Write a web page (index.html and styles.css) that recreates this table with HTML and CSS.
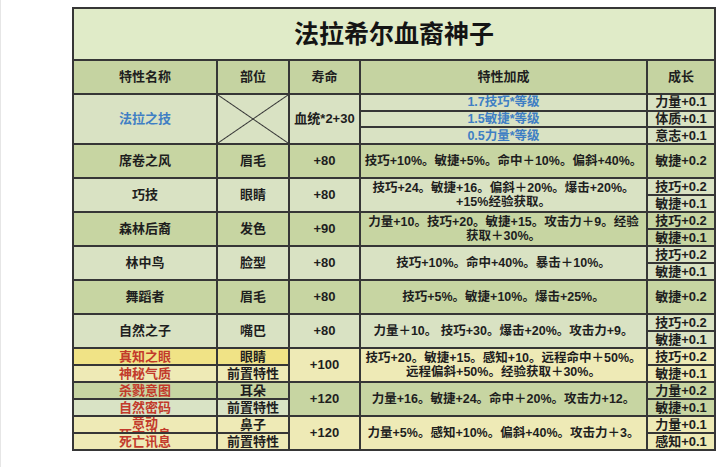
FILE: index.html
```html
<!DOCTYPE html>
<html lang="zh">
<head>
<meta charset="utf-8">
<title>法拉希尔血裔神子</title>
<link rel="stylesheet" href="styles.css">
</head>
<body>
<div class="page">
<table class="sheet">
  <colgroup>
    <col class="c1"><col class="c2"><col class="c3"><col class="c4"><col class="c5">
  </colgroup>
  <tr class="title-row"><td colspan="5" class="title">法拉希尔血裔神子</td></tr>
  <tr class="head"><th>特性名称</th><th>部位</th><th>寿命</th><th>特性加成</th><th>成长</th></tr>

  <tr class="t light"><td rowspan="3" class="blue">法拉之技</td><td rowspan="3" class="cross"></td><td rowspan="3">血统*2+30</td><td class="blue fx">1.7技巧*等级</td><td>力量+0.1</td></tr>
  <tr class="t light"><td class="blue fx">1.5敏捷*等级</td><td>体质+0.1</td></tr>
  <tr class="t light"><td class="blue fx">0.5力量*等级</td><td>意志+0.1</td></tr>

  <tr class="s dark"><td rowspan="2">席卷之风</td><td rowspan="2">眉毛</td><td rowspan="2">+80</td><td rowspan="2" class="fx">技巧+10%。敏捷+5%。命中＋10%。偏斜+40%。</td><td rowspan="2">敏捷+0.2</td></tr>
  <tr class="s dark"></tr>

  <tr class="s light"><td rowspan="2">巧技</td><td rowspan="2">眼睛</td><td rowspan="2">+80</td><td rowspan="2" class="fx">技巧+24。敏捷+16。偏斜＋20%。爆击+20%。<br>+15%经验获取。</td><td>技巧+0.2</td></tr>
  <tr class="s light"><td>敏捷+0.1</td></tr>

  <tr class="s dark"><td rowspan="2">森林后裔</td><td rowspan="2">发色</td><td rowspan="2">+90</td><td rowspan="2" class="fx">力量+10。技巧+20。敏捷+15。攻击力＋9。经验<br>获取＋30%。</td><td>技巧+0.2</td></tr>
  <tr class="s dark"><td>敏捷+0.1</td></tr>

  <tr class="s light"><td rowspan="2">林中鸟</td><td rowspan="2">脸型</td><td rowspan="2">+80</td><td rowspan="2" class="fx">技巧+10%。命中+40%。暴击＋10%。</td><td>技巧+0.2</td></tr>
  <tr class="s light"><td>敏捷+0.1</td></tr>

  <tr class="s dark"><td rowspan="2">舞蹈者</td><td rowspan="2">眉毛</td><td rowspan="2">+80</td><td rowspan="2" class="fx">技巧+5%。敏捷+10%。爆击+25%。</td><td rowspan="2">敏捷+0.2</td></tr>
  <tr class="s dark"></tr>

  <tr class="s light"><td rowspan="2">自然之子</td><td rowspan="2">嘴巴</td><td rowspan="2">+80</td><td rowspan="2" class="fx">力量＋10。 技巧+30。爆击+20%。攻击力+9。</td><td>技巧+0.2</td></tr>
  <tr class="s light"><td>敏捷+0.1</td></tr>

  <tr class="s yellow"><td class="red gold">真知之眼</td><td class="gold">眼睛</td><td rowspan="2">+100</td><td rowspan="2" class="fx">技巧+20。敏捷+15。感知+10。远程命中＋50%。<br>远程偏斜+50%。经验获取＋30%。</td><td>技巧+0.2</td></tr>
  <tr class="s yellow"><td class="red">神秘气质</td><td>前置特性</td><td>敏捷+0.1</td></tr>

  <tr class="s dark"><td class="red">杀戮意图</td><td>耳朵</td><td rowspan="2">+120</td><td rowspan="2" class="fx">力量+16。敏捷+24。命中＋20%。攻击力+12。</td><td>力量+0.2</td></tr>
  <tr class="s dark"><td class="red light-cell">自然密码</td><td class="light-cell">前置特性</td><td>敏捷+0.1</td></tr>

  <tr class="s yellow"><td class="red"><div class="clip">意动<br>死亡讯息</div></td><td>鼻子</td><td rowspan="2">+120</td><td rowspan="2" class="fx">力量+5%。感知+10%。偏斜+40%。攻击力＋3。</td><td>力量+0.1</td></tr>
  <tr class="s yellow"><td class="red">死亡讯息</td><td>前置特性</td><td>感知+0.1</td></tr>
</table>
<div class="next"></div>
</div>
</body>
</html>
```

FILE: styles.css
```css
html, body {
  margin: 0;
  padding: 0;
  background: #ffffff;
}

body {
  font-family: "Liberation Sans", "Noto Sans CJK SC", sans-serif;
  color: #1e1e1e;
  border-left: 1px solid #e6e6e6;
  height: 467px;
  box-sizing: border-box;
  overflow: hidden;
}

.page {
  padding: 7px 0 0 71px;
}

.sheet {
  border-collapse: collapse;
  table-layout: fixed;
  width: 642px;
  font-size: 13px;
  line-height: 14px;
  font-weight: 600;
}

.c1 { width: 144px; }
.c2 { width: 72px; }
.c3 { width: 71px; }
.c4 { width: 287px; }
.c5 { width: 68px; }

.sheet td,
.sheet th {
  border: 2px solid #363636;
  padding: 0;
  text-align: center;
  vertical-align: middle;
  white-space: nowrap;
  overflow: hidden;
}

.sheet td.fx {
  font-size: 12.5px;
}

.title-row { height: 52px; }
.title {
  background: #e0ebc8;
  font-size: 25px;
  font-weight: 700;
  color: #141414;
}

.head { height: 34px; background: #c5d3a1; }
.head th { font-weight: 700; font-size: 13px; }

.t { height: 16.7px; }
.s { height: 17px; }
.t td, .s td { line-height: 14px; }

.light { background: #d9e2c3; }
.dark { background: #c7d5a2; }
.yellow { background: #eeeab6; }
.gold { background: #f0e386; }
.light-cell { background: #d9e3c5; }

.blue { color: #3f7fc4; }
.red { color: #c23a2b; }

.cross {
  background:
    linear-gradient(to top right, transparent calc(50% - 1px), #363636 50%, transparent calc(50% + 1px)),
    linear-gradient(to bottom right, transparent calc(50% - 1px), #363636 50%, transparent calc(50% + 1px));
}

.clip {
  height: 15px;
  overflow: hidden;
  line-height: 12px;
}

.next {
  width: 642px;
  height: 20px;
  margin-top: 16px;
  border: 2px solid #555555;
  border-bottom: none;
  background: #f4f4f4;
  box-sizing: border-box;
}
```
